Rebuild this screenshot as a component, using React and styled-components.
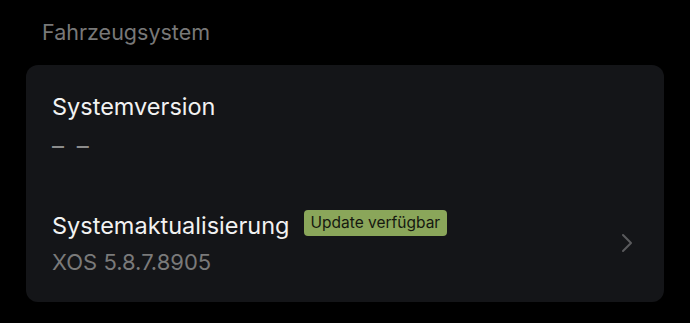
import React from "react";
import styled, { createGlobalStyle } from "styled-components";

const GlobalStyle = createGlobalStyle`
  html, body {
    margin: 0;
    padding: 0;
    background: #000;
  }
  body {
    font-family: Inter, "Noto Sans", sans-serif;
    -webkit-font-smoothing: antialiased;
  }
`;

const Page = styled.div`
  width: 690px;
  height: 323px;
  box-sizing: border-box;
  padding: 19px 26px 0 26px;
  background: #000;
`;

const SectionTitle = styled.h2`
  margin: 0 0 20px 16px;
  font-size: 21.5px;
  line-height: 26px;
  font-weight: 400;
  color: #787878;
`;

const Card = styled.div`
  background: #141518;
  border-radius: 12px;
  padding: 27px 26px 27px 26px;
  display: flex;
  flex-direction: column;
  gap: 52px;
`;

const Row = styled.div`
  display: flex;
  align-items: center;
  justify-content: space-between;
`;

const RowText = styled.div`
  display: flex;
  flex-direction: column;
  gap: 8px;
`;

const TitleLine = styled.div`
  display: flex;
  align-items: center;
  gap: 14px;
`;

const Title = styled.div`
  font-size: 23.5px;
  line-height: 30px;
  color: #f2f2f2;
`;

const Value = styled.div`
  font-size: 22px;
  line-height: 26px;
  color: #7a7a7a;
`;

const Dashes = styled(Value)`
  margin-top: 3px;
  font-size: 24px;
  color: #8c8c8c;
  letter-spacing: 3px;
`;

const Badge = styled.span`
  display: inline-block;
  background: #8aa65a;
  color: #15180f;
  font-size: 15.5px;
  line-height: 26px;
  padding: 0 7px;
  border-radius: 4px;
  margin-top: -6px;
`;

const Chevron = () => (
  <svg width="14" height="20" viewBox="0 0 14 20" style={{ marginRight: 4 }}>
    <path d="M3 2 L11 10 L3 18" fill="none" stroke="#5a5a5d" strokeWidth="2" strokeLinecap="round" strokeLinejoin="round" />
  </svg>
);

export default function App() {
  return (
    <>
      <GlobalStyle />
      <Page>
        <SectionTitle>Fahrzeugsystem</SectionTitle>
        <Card>
          <Row>
            <RowText>
              <Title>Systemversion</Title>
              <Dashes>– –</Dashes>
            </RowText>
          </Row>
          <Row>
            <RowText>
              <TitleLine>
                <Title>Systemaktualisierung</Title>
                <Badge>Update verfügbar</Badge>
              </TitleLine>
              <Value>XOS 5.8.7.8905</Value>
            </RowText>
            <Chevron />
          </Row>
        </Card>
      </Page>
    </>
  );
}
